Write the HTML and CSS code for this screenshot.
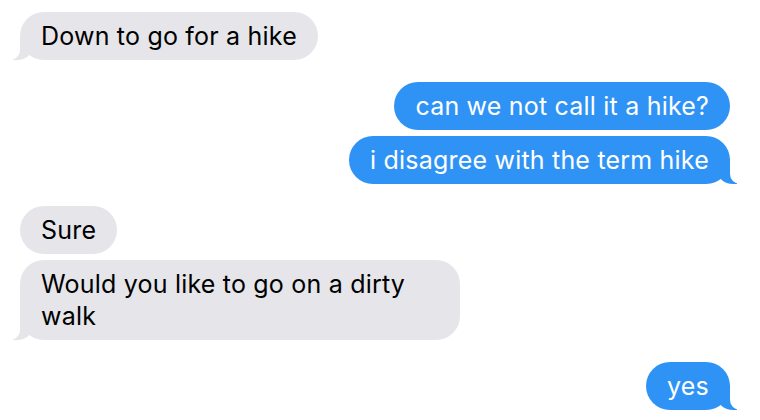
FILE: index.html
```html
<!DOCTYPE html>
<html lang="en">
<head>
    <meta charset="UTF-8">
    <meta name="viewport" content="width=device-width, initial-scale=1.0">
    <title>Messages</title>
    <link rel="stylesheet" href="styles.css">
</head>
<body>
    <div class="chat">
        <div class="group them">
            <p class="bubble tail">Down to go for a hike</p>
        </div>
        <div class="group me">
            <p class="bubble">can we not call it a hike?</p>
            <p class="bubble tail">i disagree with the term hike</p>
        </div>
        <div class="group them">
            <p class="bubble">Sure</p>
            <p class="bubble tail">Would you like to go on a dirty walk</p>
        </div>
        <div class="group me">
            <p class="bubble tail">yes</p>
        </div>
    </div>
</body>
</html>
```

FILE: styles.css
```css
body {
    margin: 0;
    background: #fff;
    font-family: Inter, "Liberation Sans", sans-serif;
}

.chat {
    display: flex;
    flex-direction: column;
    gap: 22px;
    padding: 12px 30px 0 20px;
}

.group {
    display: flex;
    flex-direction: column;
    gap: 6px;
}

.group.them {
    align-items: flex-start;
}

.group.me {
    align-items: flex-end;
}

.bubble {
    position: relative;
    margin: 0;
    max-width: 440px;
    padding: 8px 21px;
    border-radius: 24px;
    font-size: 25px;
    line-height: 32px;
    letter-spacing: 0.2px;
    box-sizing: border-box;
}

.them .bubble {
    background: #e5e5ea;
    color: #000;
}

.me .bubble {
    background: #2f93f5;
    color: #fff;
}

.bubble.tail::before,
.bubble.tail::after {
    content: "";
    position: absolute;
    bottom: 0;
    height: 25px;
}

.them .bubble.tail::before {
    left: -7px;
    width: 20px;
    background: #e5e5ea;
    border-bottom-right-radius: 16px 14px;
}

.them .bubble.tail::after {
    left: -26px;
    width: 26px;
    background: #fff;
    border-bottom-right-radius: 10px;
}

.me .bubble.tail::before {
    right: -7px;
    width: 20px;
    background: #2f93f5;
    border-bottom-left-radius: 16px 14px;
}

.me .bubble.tail::after {
    right: -26px;
    width: 26px;
    background: #fff;
    border-bottom-left-radius: 10px;
}
```
